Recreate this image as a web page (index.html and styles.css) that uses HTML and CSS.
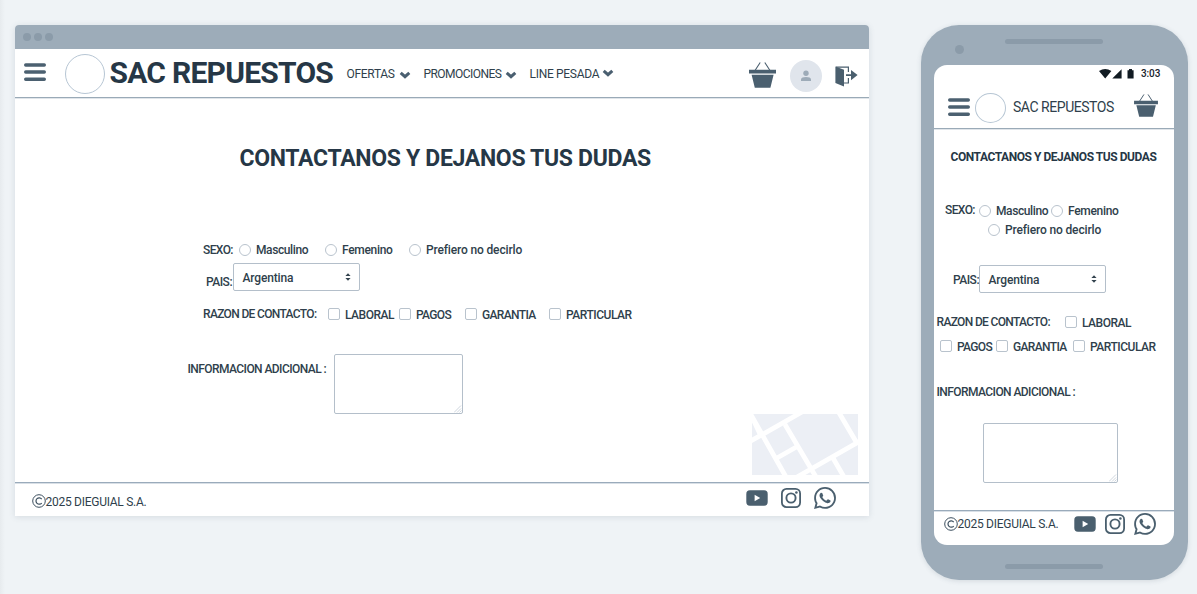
FILE: index.html
```html
<!DOCTYPE html>
<html lang="es">
<head>
<meta charset="utf-8">
<title>SAC Repuestos - Contacto</title>
<link rel="stylesheet" href="styles.css">
</head>
<body>
<svg class="sprites" width="0" height="0">
  <symbol id="menu" viewBox="0 0 22 18"><path d="M1.7 2H20.3M1.7 9H20.3M1.7 16.2H20.3" stroke="#4b6070" stroke-width="3.4" stroke-linecap="round"/></symbol>
  <symbol id="basket" viewBox="0 0 27 26"><path d="M6 8.5 11.2.5M21 8.5 15.8.5" stroke="#4a5f6f" stroke-width="1.1" fill="none"/><path d="M0 7.7H27V11.6H0ZM2.6 12.7H24.6L21.4 25.7H5.8Z" fill="#4a5f6f"/></symbol>
  <symbol id="chev" viewBox="0 0 12 8"><path d="M1.7 1.8 6 5.7 10.3 1.8" fill="none" stroke="#4a5f70" stroke-width="3"/></symbol>
  <symbol id="youtube" viewBox="0 0 22 16"><rect x=".3" y=".3" width="21.4" height="15.4" rx="3.6" fill="#4a5f6e"/><path d="M8.6 4.8V11.2L14.2 8Z" fill="#fff"/></symbol>
  <symbol id="instagram" viewBox="0 0 22 22"><rect x="1.9" y="1.9" width="18.2" height="18.2" rx="4.6" fill="none" stroke="#4a5f6e" stroke-width="1.8"/><circle cx="11" cy="11" r="4.6" fill="none" stroke="#4a5f6e" stroke-width="1.9"/><circle cx="16.4" cy="5.5" r="1.3" fill="#4a5f6e"/></symbol>
  <symbol id="whatsapp" viewBox="0 0 24 24"><path fill="#4a5f6e" d="M17.472 14.382c-.297-.149-1.758-.867-2.03-.967-.273-.099-.471-.148-.67.15-.197.297-.767.966-.94 1.164-.173.199-.347.223-.644.075-.297-.15-1.255-.463-2.39-1.475-.883-.788-1.48-1.761-1.653-2.059-.173-.297-.018-.458.13-.606.134-.133.298-.347.446-.52.149-.174.198-.298.298-.497.099-.198.05-.371-.025-.52-.075-.149-.669-1.612-.916-2.207-.242-.579-.487-.5-.669-.51-.173-.008-.371-.01-.57-.01-.198 0-.52.074-.792.372-.272.297-1.04 1.016-1.04 2.479 0 1.462 1.065 2.875 1.213 3.074.149.198 2.096 3.2 5.077 4.487.709.306 1.262.489 1.694.625.712.227 1.36.195 1.871.118.571-.085 1.758-.719 2.006-1.413.248-.694.248-1.289.173-1.413-.074-.124-.272-.198-.57-.347m-5.421 7.403a9.87 9.87 0 0 1-5.031-1.378l-.361-.214-3.741.982.998-3.648-.235-.374a9.86 9.86 0 0 1-1.51-5.26c.001-5.45 4.436-9.884 9.888-9.884a9.88 9.88 0 0 1 9.884 9.893c-.003 5.45-4.437 9.884-9.885 9.884m8.413-18.297A11.8 11.8 0 0 0 12.05 0C5.495 0 .16 5.335.157 11.892c0 2.096.547 4.142 1.588 5.945L.057 24l6.305-1.654a11.9 11.9 0 0 0 5.683 1.448h.005c6.554 0 11.89-5.335 11.893-11.893a11.8 11.8 0 0 0-3.48-8.413Z"/></symbol>
  <symbol id="copy" viewBox="0 0 14 14"><circle cx="7" cy="7" r="6.3" fill="none" stroke="#3c4f5f" stroke-width="1"/><path d="M9.7 5A3.2 3.2 0 1 0 9.7 9" fill="none" stroke="#3c4f5f" stroke-width="1.2"/></symbol>
  <symbol id="sort" viewBox="0 0 6 8"><path d="M.4 3 3 .2 5.6 3ZM.4 5 3 7.8 5.6 5Z" fill="#33434f"/></symbol>
  <symbol id="grip" viewBox="0 0 8 8"><path d="M0 7.5 7 .5M3 7.5 7 3.5M5.5 7.5 7.5 5.5" stroke="#cfd6de" stroke-width="1"/></symbol>
</svg>

<main class="canvas">
<section class="browser">
  <div class="chrome"><i></i><i></i><i></i></div>
  <header class="top">
    <svg class="menu"><use href="#menu"/></svg>
    <span class="logo"></span>
    <h1 class="brand">SAC REPUESTOS</h1>
    <nav class="nav">
      <a class="n1"><span>OFERTAS</span><svg class="chev"><use href="#chev"/></svg></a>
      <a class="n2"><span>PROMOCIONES</span><svg class="chev"><use href="#chev"/></svg></a>
      <a class="n3"><span>LINE PESADA</span><svg class="chev up"><use href="#chev"/></svg></a>
    </nav>
    <svg class="basket"><use href="#basket"/></svg>
    <span class="avatar"><svg width="12" height="12" viewBox="0 0 12 12"><circle cx="6" cy="3.2" r="2.7" fill="#9dabb8"/><path d="M1 11V9.3Q1.5 7 6 7T11 9.3V11Z" fill="#9dabb8"/></svg></span>
    <svg class="exit" viewBox="0 0 23 21"><path d="M1 1.2H13.4V6M13.4 12V17H9" fill="none" stroke="#4a5f6e" stroke-width="1.2"/><path d="M.4.6 9 3.8V20.6L.4 17ZM16 3.9 22.6 9 16 14.2V10H11V8.2H16Z" fill="#4a5f6e"/></svg>
  </header>
  <div class="content">
    <h2 class="title">CONTACTANOS Y DEJANOS TUS DUDAS</h2>
    <div class="row sex">
      <span class="lab w-sexo">SEXO:</span>
      <label class="opt o1"><i class="radio"></i><span class="t-masc">Masculino</span></label>
      <label class="opt o2"><i class="radio"></i><span class="t-fem">Femenino</span></label>
      <label class="opt"><i class="radio"></i><span class="t-pref">Prefiero no decirlo</span></label>
    </div>
    <div class="row country">
      <span class="lab w-pais">PAIS:</span>
      <div class="select"><span class="t-arg">Argentina</span><svg class="sort"><use href="#sort"/></svg></div>
    </div>
    <div class="row reason">
      <span class="lab w-razon t-razon">RAZON DE CONTACTO:</span>
      <label class="opt c1"><i class="box"></i><span class="t-lab">LABORAL</span></label>
      <label class="opt c2"><i class="box"></i><span class="t-pag">PAGOS</span></label>
      <label class="opt c3"><i class="box"></i><span class="t-gar">GARANTIA</span></label>
      <label class="opt"><i class="box"></i><span class="t-part">PARTICULAR</span></label>
    </div>
    <div class="row info">
      <span class="lab w-info t-info">INFORMACION ADICIONAL :</span>
      <div class="area"><svg class="grip"><use href="#grip"/></svg></div>
    </div>
    <svg class="map" viewBox="0 0 106 61"><rect width="106" height="61" fill="#eceff5"/><path d="M-2 27.5 50-2M-2-1 34 63M8 20 2 7M33 10.5 64 63M25 44 47 31.5M45 63 108 27M86-3 106 31M81 44 92 63" fill="none" stroke="#fff" stroke-width="4.8"/></svg>
  </div>
  <footer class="foot">
    <svg class="copy"><use href="#copy"/></svg><span class="t-foot">2025 DIEGUIAL S.A.</span>
    <div class="social"><svg class="yt"><use href="#youtube"/></svg><svg class="ig"><use href="#instagram"/></svg><svg class="wa"><use href="#whatsapp"/></svg></div>
  </footer>
</section>

<section class="phone">
  <div class="speaker"></div>
  <div class="camera"></div>
  <div class="screen">
    <div class="status">
      <svg width="36" height="10" viewBox="0 0 36 10"><path d="M0 2Q6.2-2 12.4 2L6.2 9.4ZM13.3 9.4 22.6.3V9.4ZM28.5 1.2H30V0H33V1.2H34.6V9.5H28.5Z" fill="#111b22"/></svg>
      <span>3:03</span>
    </div>
    <header class="ptop">
      <svg class="menu"><use href="#menu"/></svg>
      <span class="logo small"></span>
      <span class="pbrand">SAC REPUESTOS</span>
      <svg class="basket"><use href="#basket"/></svg>
    </header>
    <div class="pcontent">
      <h2 class="ptitle">CONTACTANOS Y DEJANOS TUS DUDAS</h2>
      <div class="row psex">
        <span class="lab w-sexo">SEXO:</span>
        <label class="opt po1"><i class="radio"></i><span class="t-masc">Masculino</span></label>
        <label class="opt"><i class="radio"></i><span class="t-fem">Femenino</span></label>
      </div>
      <div class="row pref"><label class="opt"><i class="radio"></i><span class="t-pref">Prefiero no decirlo</span></label></div>
      <div class="row pcountry">
        <span class="lab w-pais">PAIS:</span>
        <div class="select"><span class="t-arg">Argentina</span><svg class="sort"><use href="#sort"/></svg></div>
      </div>
      <div class="row preason">
        <span class="lab w-prazon t-razon">RAZON DE CONTACTO:</span>
        <label class="opt"><i class="box"></i><span class="t-lab">LABORAL</span></label>
      </div>
      <div class="row pchecks">
        <label class="opt pc1"><i class="box"></i><span class="t-pag">PAGOS</span></label>
        <label class="opt pc2"><i class="box"></i><span class="t-gar">GARANTIA</span></label>
        <label class="opt"><i class="box"></i><span class="t-part">PARTICULAR</span></label>
      </div>
      <div class="row pinfo"><span class="lab t-info">INFORMACION ADICIONAL :</span></div>
      <div class="area parea"><svg class="grip"><use href="#grip"/></svg></div>
    </div>
    <footer class="pfoot">
      <svg class="copy"><use href="#copy"/></svg><span class="t-foot">2025 DIEGUIAL S.A.</span>
      <div class="social"><svg class="yt"><use href="#youtube"/></svg><svg class="ig"><use href="#instagram"/></svg><svg class="wa"><use href="#whatsapp"/></svg></div>
    </footer>
  </div>
  <div class="home"></div>
</section>
</main>
</body>
</html>
```

FILE: styles.css
```css
* { box-sizing: border-box; margin: 0; padding: 0; }
body { width: 1197px; height: 594px; overflow: hidden; background: linear-gradient(90deg, #e7ebee, #eff3f6 5px); font: 500 12px/16px Roboto, sans-serif; color: #2f3f4c; }
svg { display: block; flex: none; }
.sprites { position: absolute; }
span { white-space: nowrap; }
.canvas { display: flex; align-items: flex-start; gap: 52px; padding: 25px 0 0 15px; }

.browser { width: 854px; height: 490.5px; background: #fff; border-radius: 4px 4px 0 0; box-shadow: 0 1px 6px rgba(60,80,100,.14); display: flex; flex-direction: column; }
.chrome { height: 24px; flex: none; background: #9dacb9; border-radius: 4px 4px 0 0; display: flex; align-items: center; gap: 3px; padding-left: 8px; }
.chrome i { width: 8px; height: 8px; border-radius: 50%; background: #8b9ba9; }
.top { height: 49px; flex: none; border-bottom: 1px solid #9aaab7; box-shadow: 0 1px #e0e5ea; display: flex; align-items: flex-start; padding-left: 8.5px; }
.menu { width: 22px; height: 18px; margin-top: 14px; }
.logo { width: 40px; height: 40px; margin: 5px 0 0 19.5px; border: 1px solid #b7c6d4; border-radius: 50%; flex: none; }
.brand { width: 237px; flex: none; margin: 6px 0 0 4.5px; font-size: 30px; line-height: 36px; font-weight: 700; letter-spacing: -.75px; color: #263746; white-space: nowrap; }
.nav { display: flex; flex: none; width: 402.5px; padding-top: 17px; }
.nav a { display: flex; font-weight: 400; }
.n1 { width: 77px; letter-spacing: -.3px; } .n1 span { width: 52px; }
.n2 { width: 106px; letter-spacing: -.55px; } .n2 span { width: 81px; }
.n3 { letter-spacing: -.3px; } .n3 span { width: 72px; }
.chev { width: 12px; height: 8px; margin-top: 5px; }
.chev.up { margin-top: 3px; }
.basket { width: 27px; height: 26px; margin-top: 13px; }
.avatar { width: 32px; height: 32px; margin: 11px 0 0 14px; border-radius: 50%; background: #e0e5ec; display: grid; place-items: center; }
.exit { width: 23px; height: 21px; margin: 17px 0 0 13px; }

.content { flex: 1; display: flex; flex-direction: column; align-items: flex-start; }
.title { margin: 45px 0 0 224.5px; font-size: 23px; line-height: 32px; font-weight: 700; letter-spacing: -.32px; color: #263746; white-space: nowrap; }
.row { display: flex; }
.opt { display: flex; align-items: center; height: 16px; }
.radio, .box { width: 12px; height: 12px; margin-right: 5px; border: 1px solid #b9c3cd; border-radius: 50%; flex: none; }
.box { border-radius: 2px; }
.sex { margin: 67px 0 0 188px; }
.w-sexo { width: 36px; letter-spacing: -.6px; }
.t-masc { letter-spacing: -.4px; }
.t-fem { letter-spacing: -.3px; }
.t-pref { letter-spacing: -.15px; }
.t-arg { letter-spacing: -.15px; padding: 1px 0 0 .5px; }
.t-razon { letter-spacing: -.66px; }
.t-lab { letter-spacing: -.5px; }
.t-pag { letter-spacing: -.65px; }
.t-gar { letter-spacing: -.65px; }
.t-part { letter-spacing: -.47px; }
.t-info { letter-spacing: -.57px; }
.box + span { padding-top: 1px; }
.o1 { width: 86px; } .o2 { width: 84px; }
.country { margin: 5px 0 0 191px; }
.w-pais { width: 27px; padding-top: 11px; letter-spacing: -.5px; }
.select { width: 127px; height: 28px; border: 1px solid #b4bfca; border-radius: 2px; display: flex; align-items: center; justify-content: space-between; padding: 0 8px; }
.sort { width: 6px; height: 8px; }
.reason { margin: 15px 0 0 188px; }
.w-razon { width: 125px; }
.c1 { width: 71px; } .c2 { width: 66px; } .c3 { width: 84px; }
.info { margin: 32px 0 0 172.5px; }
.w-info { width: 146.5px; padding-top: 7px; }
.area { width: 129px; height: 60px; border: 1px solid #b4bfca; border-radius: 2px; display: flex; align-items: flex-end; justify-content: flex-end; }
.grip { width: 8px; height: 8px; }
.map { width: 106px; height: 61px; margin-left: 737px; }
.foot { height: 34px; flex: none; border-top: 1px solid #9aabbb; box-shadow: inset 0 1px #d8dfe6; display: flex; padding-left: 16.5px; }
.copy { width: 14px; height: 14px; }
.foot .copy { margin-top: 11px; }
.foot .t-foot { width: 700px; padding-top: 11px; }
.t-foot { font-weight: 400; letter-spacing: -.27px; }
.social { display: flex; align-items: center; gap: 12px; height: 22px; margin-top: 4px; }
.yt { width: 22px; height: 16px; } .ig, .wa { width: 22px; height: 22px; }

.phone { position: relative; width: 266.5px; height: 555px; border-radius: 38px; background: #9dacb9; box-shadow: 0 1px 5px rgba(60,80,100,.16); padding: 40px 13px 0; }
.speaker, .home { position: absolute; left: 84px; width: 98px; height: 5px; border-radius: 3px; background: #8b9ba9; }
.speaker { top: 14px; } .home { top: 539px; }
.camera { position: absolute; left: 34px; top: 20px; width: 9px; height: 9px; border-radius: 50%; background: #8b9ba9; }
.screen { width: 240px; height: 480px; border-radius: 13px; background: #fff; display: flex; flex-direction: column; }
.status { display: flex; height: 18px; padding: 4px 0 0 165px; gap: 6px; color: #17222b; }
.status span { font-size: 10px; line-height: 10px; letter-spacing: -.1px; }
.ptop { display: flex; height: 46px; flex: none; padding-left: 13.5px; border-bottom: 1px solid #9aaab7; box-shadow: 0 1px #e0e5ea; }
.ptop .menu { margin-top: 15px; }
.logo.small { width: 31px; height: 30px; margin: 10px 0 0 5.5px; }
.pbrand { width: 121px; margin: 14px 0 0 7px; font-size: 14px; line-height: 20px; font-weight: 400; letter-spacing: -.46px; }
.ptop .basket { width: 24px; height: 23px; margin-top: 11px; }
.pcontent { flex: 1; display: flex; flex-direction: column; align-items: flex-start; }
.ptitle { margin: 20px 0 0 16.5px; font-size: 12px; line-height: 16px; font-weight: 700; letter-spacing: -.45px; color: #263746; white-space: nowrap; }
.psex { margin: 38px 0 0 11px; }
.psex .w-sexo { width: 34px; margin-top: -1px; }
.po1 { width: 72px; }
.pref { margin: 3px 0 0 54px; }
.pcountry { margin: 27px 0 0 19px; }
.pcountry .w-pais { width: 26px; padding-top: 7px; }
.preason { margin: 21px 0 0 2.5px; }
.w-prazon { width: 128.5px; }
.pchecks { margin: 8px 0 0 6px; }
.pc1 { width: 56px; } .pc2 { width: 77px; }
.pinfo { margin: 30px 0 0 2.5px; }
.parea { width: 135px; margin: 23px 0 0 49px; }
.pfoot { height: 35px; flex: none; display: flex; border-top: 1px solid #9aabbb; box-shadow: inset 0 1px #d8dfe6; padding-left: 9.5px; }
.pfoot .copy { margin-top: 6px; }
.pfoot .t-foot { width: 116px; padding-top: 5px; }
.pfoot .social { margin-top: 2px; gap: 8px; }
```
